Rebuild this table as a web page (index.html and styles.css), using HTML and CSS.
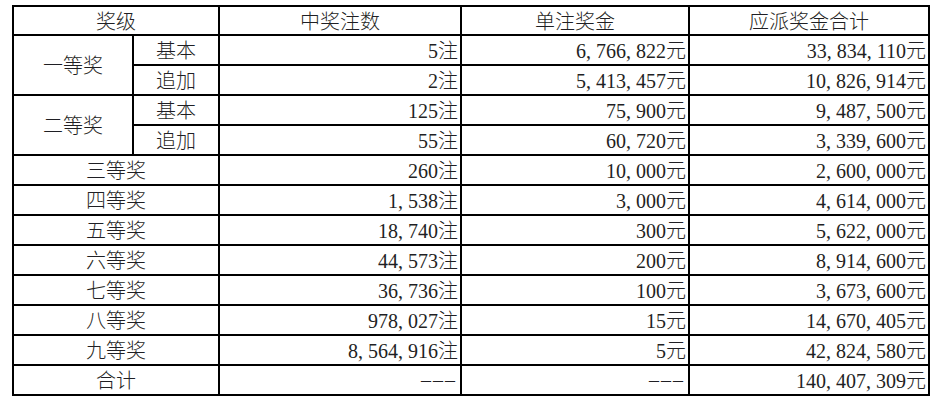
FILE: index.html
```html
<!DOCTYPE html>
<html lang="zh-CN">
<head>
<meta charset="utf-8">
<link rel="stylesheet" href="styles.css">
</head>
<body>
<table class="prize">
  <colgroup>
    <col class="c1"><col class="c2"><col class="c3"><col class="c4"><col class="c5">
  </colgroup>
  <tr class="head">
    <td colspan="2">奖级</td><td>中奖注数</td><td>单注奖金</td><td>应派奖金合计</td>
  </tr>
  <tr>
    <td rowspan="2" class="lvl">一等奖</td><td class="sub">基本</td>
    <td class="num">5<span class="cj">注</span></td><td class="num">6, 766, 822<span class="cj">元</span></td><td class="num">33, 834, 110<span class="cj">元</span></td>
  </tr>
  <tr>
    <td class="sub">追加</td>
    <td class="num">2<span class="cj">注</span></td><td class="num">5, 413, 457<span class="cj">元</span></td><td class="num">10, 826, 914<span class="cj">元</span></td>
  </tr>
  <tr>
    <td rowspan="2" class="lvl">二等奖</td><td class="sub">基本</td>
    <td class="num">125<span class="cj">注</span></td><td class="num">75, 900<span class="cj">元</span></td><td class="num">9, 487, 500<span class="cj">元</span></td>
  </tr>
  <tr>
    <td class="sub">追加</td>
    <td class="num">55<span class="cj">注</span></td><td class="num">60, 720<span class="cj">元</span></td><td class="num">3, 339, 600<span class="cj">元</span></td>
  </tr>
  <tr>
    <td colspan="2" class="lvl">三等奖</td>
    <td class="num">260<span class="cj">注</span></td><td class="num">10, 000<span class="cj">元</span></td><td class="num">2, 600, 000<span class="cj">元</span></td>
  </tr>
  <tr>
    <td colspan="2" class="lvl">四等奖</td>
    <td class="num">1, 538<span class="cj">注</span></td><td class="num">3, 000<span class="cj">元</span></td><td class="num">4, 614, 000<span class="cj">元</span></td>
  </tr>
  <tr>
    <td colspan="2" class="lvl">五等奖</td>
    <td class="num">18, 740<span class="cj">注</span></td><td class="num">300<span class="cj">元</span></td><td class="num">5, 622, 000<span class="cj">元</span></td>
  </tr>
  <tr>
    <td colspan="2" class="lvl">六等奖</td>
    <td class="num">44, 573<span class="cj">注</span></td><td class="num">200<span class="cj">元</span></td><td class="num">8, 914, 600<span class="cj">元</span></td>
  </tr>
  <tr>
    <td colspan="2" class="lvl">七等奖</td>
    <td class="num">36, 736<span class="cj">注</span></td><td class="num">100<span class="cj">元</span></td><td class="num">3, 673, 600<span class="cj">元</span></td>
  </tr>
  <tr>
    <td colspan="2" class="lvl">八等奖</td>
    <td class="num">978, 027<span class="cj">注</span></td><td class="num">15<span class="cj">元</span></td><td class="num">14, 670, 405<span class="cj">元</span></td>
  </tr>
  <tr>
    <td colspan="2" class="lvl">九等奖</td>
    <td class="num">8, 564, 916<span class="cj">注</span></td><td class="num">5<span class="cj">元</span></td><td class="num">42, 824, 580<span class="cj">元</span></td>
  </tr>
  <tr>
    <td colspan="2" class="lvl">合计</td>
    <td class="num"><span class="dash">–––</span></td><td class="num"><span class="dash">–––</span></td><td class="num">140, 407, 309<span class="cj">元</span></td>
  </tr>
</table>
</body>
</html>
```

FILE: styles.css
```css
html, body {
  margin: 0;
  padding: 0;
  background: #ffffff;
}
body {
  padding: 5px 0 0 12px;
}
.prize {
  border-collapse: collapse;
  table-layout: fixed;
  width: 916px;
  color: #1f1f24;
  font-family: "Noto Sans CJK SC", "Noto Sans", sans-serif;
  font-weight: 300;
  font-size: 20px;
}
.c1 { width: 120px; }
.c2 { width: 86px; }
.c3 { width: 242px; }
.c4 { width: 228px; }
.c5 { width: 240px; }
.prize td {
  border: 2px solid #000;
  height: 28px;
  padding: 0 3px 0 3px;
  line-height: 24px;
  text-align: center;
  vertical-align: middle;
  white-space: nowrap;
}
.prize .head td {
  height: 27px;
}
.prize td.num {
  text-align: right;
  font-family: "Liberation Serif", "Noto Sans CJK SC", serif;
  font-weight: 400;
  padding-right: 2px;
}
.cj {
  font-family: "Noto Sans CJK SC", sans-serif;
  font-weight: 300;
}
.dash {
  letter-spacing: 2px;
  margin-right: 1px;
}
```
